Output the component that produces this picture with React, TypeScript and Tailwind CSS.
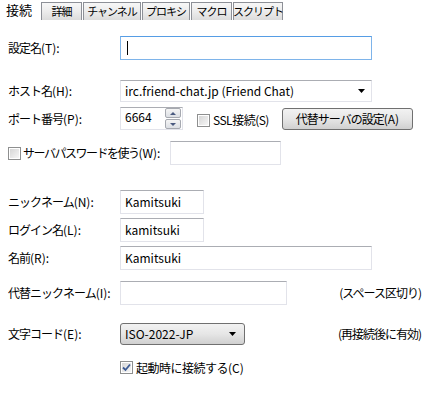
import React from 'react'

const font = "font-['Noto_Sans_CJK_JP','Noto_Sans',sans-serif]"

function Jp({ text, tight = 'tracking-[-1px]' }: { text: string; tight?: string }) {
  const i = text.indexOf('(')
  if (i <= 0) return <span className={tight}>{text}</span>
  return (
    <>
      <span className={tight}>{text.slice(0, i)}</span>
      <span>{text.slice(i)}</span>
    </>
  )
}

function Tab({ label, width }: { label: string; width: string }) {
  return (
    <div
      className={`${width} h-[18px] border border-b-0 border-[#8d9097] bg-gradient-to-b from-[#f7f7f7] via-[#ececec] to-[#dcdcdc] flex items-center justify-center whitespace-nowrap text-[11px] tracking-[-1px] leading-none text-black`}
    >
      {label}
    </div>
  )
}

function Label({ text }: { text: string }) {
  return (
    <div className="w-[112px] shrink-0 whitespace-nowrap text-[12px] leading-none text-black">
      <Jp text={text} />
    </div>
  )
}

function TextBox({ width, value, focused }: { width: string; value?: string; focused?: boolean }) {
  return (
    <div
      className={`${width} h-full shrink-0 bg-white border flex items-center pl-[4px] text-[12px] leading-none text-black ${
        focused
          ? 'border-[#7eb4ea] border-t-[#569de5]'
          : 'border-[#e2e3ea] border-t-[#abadb3]'
      }`}
    >
      {focused && <span className="w-px h-[14px] bg-black ml-[2px]" />}
      {value}
    </div>
  )
}

function CheckBox({ checked }: { checked?: boolean }) {
  return (
    <div className="w-[13px] h-[13px] shrink-0 border border-[#8e8f8f] bg-white p-[1px]">
      <div className="w-full h-full bg-gradient-to-br from-[#d6d6d6] to-[#f6f6f6] flex items-center justify-center">
        {checked && (
          <svg width="9" height="9" viewBox="0 0 9 9">
            <path d="M1 4.5 L3.5 7 L8 1.5" fill="none" stroke="#3c5a94" strokeWidth="1.8" />
          </svg>
        )}
      </div>
    </div>
  )
}

function Arrow() {
  return (
    <svg width="8" height="4" viewBox="0 0 8 4">
      <path d="M0 0 H7 L3.5 4 Z" fill="#000" />
    </svg>
  )
}

function SpinBtn({ up }: { up?: boolean }) {
  return (
    <div className="w-[16px] h-[10px] border border-[#a6a9b0] rounded-[2px] bg-gradient-to-b from-[#f5f5f5] to-[#dcdfe4] flex items-center justify-center">
      <svg width="6" height="3" viewBox="0 0 6 3">
        <path d={up ? 'M0 3 H6 L3 0 Z' : 'M0 0 H6 L3 3 Z'} fill="#4a5a80" />
      </svg>
    </div>
  )
}

export default function App() {
  return (
    <div className={`w-[428px] h-[394px] bg-white overflow-hidden ${font}`}>
      {/* tabs */}
      <div className="flex items-end h-[20px]">
        <div className="w-[41px] h-[20px] bg-white pl-[6px] pt-[3px] whitespace-nowrap text-[13px] leading-none text-black">接続</div>
        <Tab label="詳細" width="w-[41px]" />
        <div className="w-px" />
        <Tab label="チャンネル" width="w-[58px]" />
        <div className="w-px" />
        <Tab label="プロキシ" width="w-[48px]" />
        <div className="w-px" />
        <Tab label="マクロ" width="w-[41px]" />
        <div className="w-px" />
        <Tab label="スクリプト" width="w-[50px]" />
      </div>

      <div className="pl-[8px]">
        <div className="flex items-center h-[24px] mt-[16px]">
          <Label text="設定名(T):" />
          <TextBox width="w-[252px]" focused />
        </div>

        <div className="flex items-center h-[22px] mt-[20px]">
          <Label text="ホスト名(H):" />
          <div className="w-[252px] h-full bg-white border border-[#e2e3ea] border-t-[#abadb3] flex items-center justify-between pl-[4px] pr-[5px] text-[12px] leading-none text-black">
            <span>irc.friend-chat.jp (Friend Chat)</span>
            <Arrow />
          </div>
        </div>

        <div className="flex items-center h-[23px] mt-[5px]">
          <Label text="ポート番号(P):" />
          <div className="w-[63px] h-full shrink-0 bg-white border border-[#e2e3ea] border-t-[#abadb3] flex items-center justify-between pl-[4px] pr-[1px] text-[12px] leading-none text-black">
            <span className="-mt-[3px]">6664</span>
            <div className="flex flex-col gap-px">
              <SpinBtn up />
              <SpinBtn />
            </div>
          </div>
          <div className="ml-[14px] mt-[3px] flex items-center gap-[3px] whitespace-nowrap text-[12px] leading-none text-black">
            <CheckBox />
            <span className="tracking-[-0.5px]">SSL接続(S)</span>
          </div>
          <div className="ml-[13px] w-[131px] h-[22px] shrink-0 border border-[#707070] rounded-[3px] bg-gradient-to-b from-[#f2f2f2] via-[#e6e6e6] to-[#d0d0d0] flex items-center justify-center whitespace-nowrap text-[12px] leading-none text-black">
            <Jp text="代替サーバの設定(A)" />
          </div>
        </div>

        <div className="flex items-center h-[24px] mt-[11px]">
          <div className="w-[162px] shrink-0 flex items-center gap-[2px] whitespace-nowrap text-[12px] leading-none text-black">
            <CheckBox />
            <span>
              <Jp text="サーバパスワードを使う(W):" tight="tracking-[-1.5px]" />
            </span>
          </div>
          <TextBox width="w-[111px]" />
        </div>

        <div className="flex items-center h-[24px] mt-[25px]">
          <Label text="ニックネーム(N):" />
          <TextBox width="w-[84px]" value="Kamitsuki" />
        </div>

        <div className="flex items-center h-[24px] mt-[4px]">
          <Label text="ログイン名(L):" />
          <TextBox width="w-[84px]" value="kamitsuki" />
        </div>

        <div className="flex items-center h-[24px] mt-[4px]">
          <Label text="名前(R):" />
          <TextBox width="w-[252px]" value="Kamitsuki" />
        </div>

        <div className="flex items-center h-[24px] mt-[11px]">
          <Label text="代替ニックネーム(I):" />
          <TextBox width="w-[167px]" />
          <div className="flex-1 text-right pr-[7px] whitespace-nowrap text-[12px] tracking-[-1px] leading-none text-black">(スペース区切り)</div>
        </div>

        <div className="flex items-center h-[22px] mt-[18px]">
          <Label text="文字コード(E):" />
          <div className="w-[125px] h-full shrink-0 border border-[#707070] rounded-[3px] bg-gradient-to-b from-[#f2f2f2] via-[#e6e6e6] to-[#d0d0d0] flex items-center justify-between pl-[4px] pr-[7px] text-[12px] leading-none text-black">
            <span>ISO-2022-JP</span>
            <Arrow />
          </div>
          <div className="flex-1 text-right pr-[7px] whitespace-nowrap text-[12px] tracking-[-1px] leading-none text-black">(再接続後に有効)</div>
        </div>

        <div className="flex items-center h-[13px] mt-[16px] pl-[112px] gap-[3px] whitespace-nowrap text-[12px] leading-none text-black">
          <CheckBox checked />
          <span>
            <Jp text="起動時に接続する(C)" tight="tracking-[-0.5px]" />
          </span>
        </div>
      </div>
    </div>
  )
}
